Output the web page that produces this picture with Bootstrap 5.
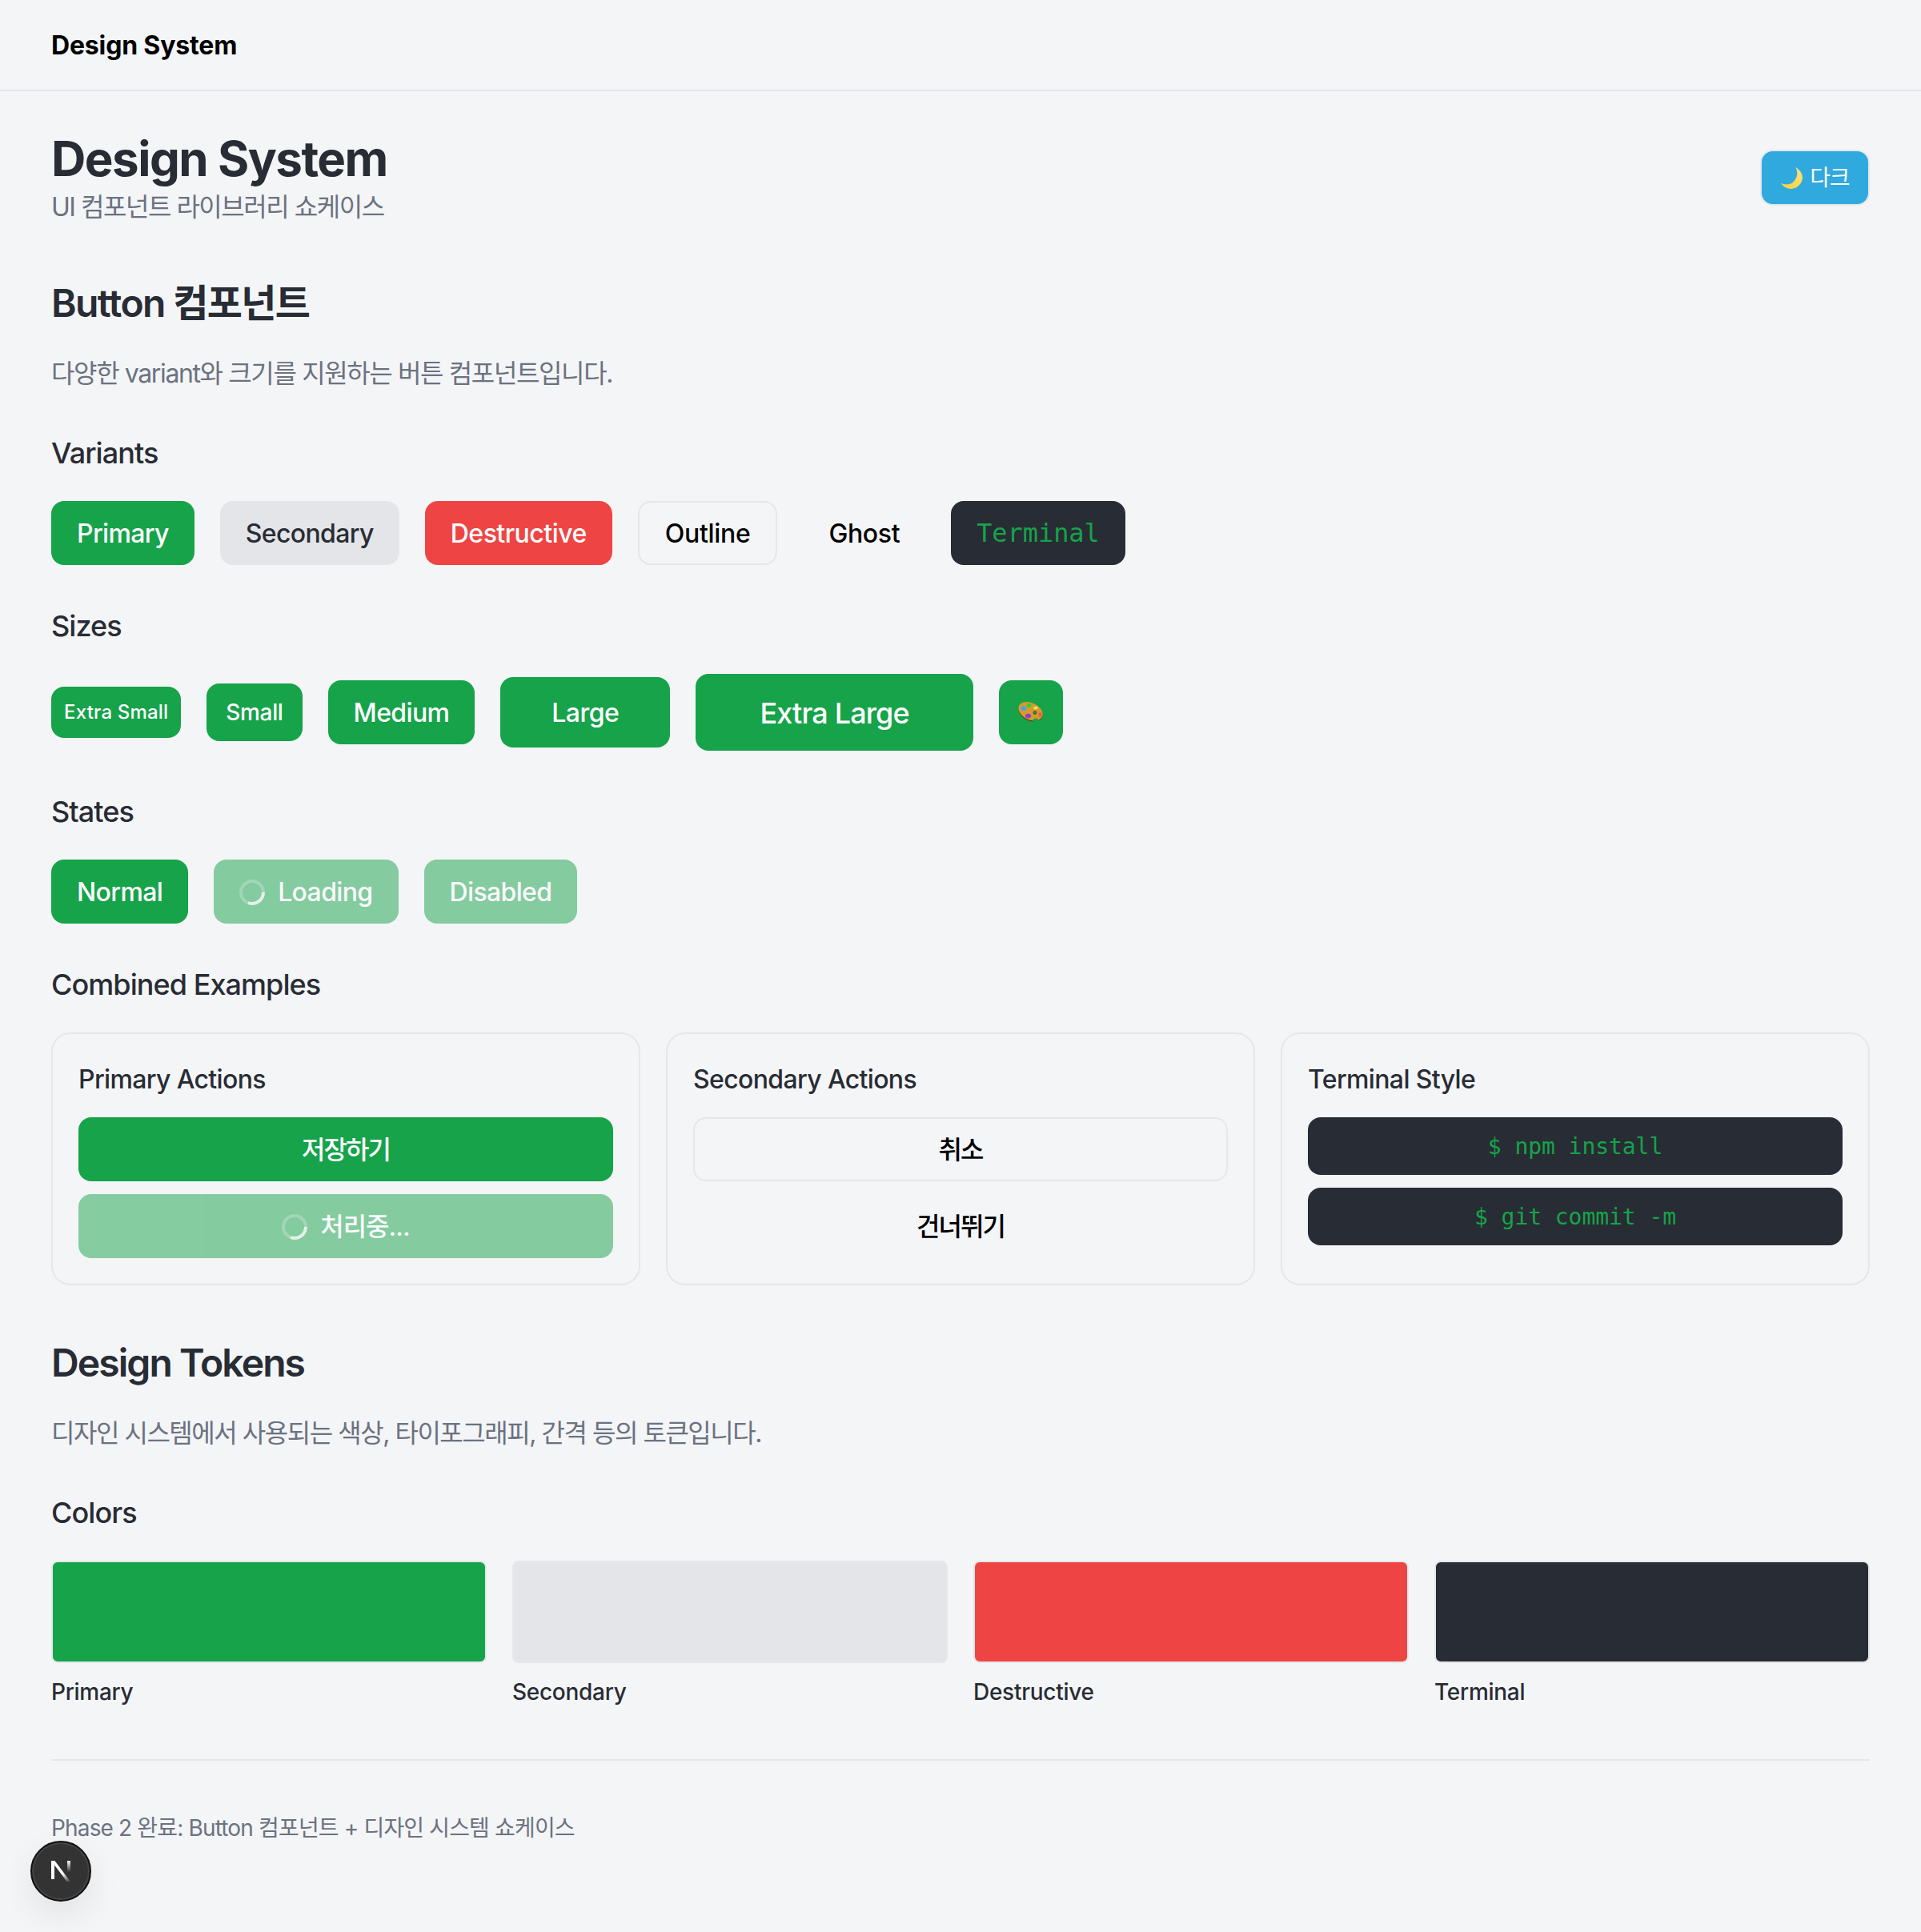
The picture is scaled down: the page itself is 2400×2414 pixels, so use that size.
<!DOCTYPE html>
<html lang="ko">
<head>
  <meta charset="UTF-8">
  <title>Design System</title>
  <meta name="viewport" content="width=device-width, initial-scale=1.0">
  <link href="https://cdn.jsdelivr.net/npm/bootstrap@5.3.0/dist/css/bootstrap.min.css" rel="stylesheet">
  <style>
    body { background: #f4f5f7; color: #282c34; min-height: 2414px; position: relative;
      font-family: Inter, "Noto Sans CJK KR", sans-serif; font-size: 32px; line-height: 48px; }
    .ds-nav { height: 114px; padding: 2px 64px 0; border-bottom: 2px solid #e5e7eb; }
    .ds-brand { font-size: 32px; font-weight: 700; letter-spacing: -0.005em; color: #000; padding: 0; margin: 0; }
    .ds-main { padding: 48px 64px 0; }
    .ds-title { font-size: 60px; line-height: 72px; font-weight: 700; letter-spacing: -0.025em; margin: 0; }
    .ds-muted { color: #6b7280; }
    .ds-ko { letter-spacing: -0.046em; padding-top: 1px; margin-bottom: -1px !important; }
    .ds-ko-wide { letter-spacing: -0.043em; }
    .ds-theme { height: 70px; padding: 0 24px; gap: 8px; font-size: 28px; line-height: 40px; color: #fff;
      background: #2fa9de; border: 2px solid #e5e7eb; border-radius: 16px; letter-spacing: -0.05em; }
    .ds-h2 { font-size: 48px; line-height: 64px; font-weight: 600; letter-spacing: -0.034em; margin: 64px 0 32px; padding-top: 1px; height: 64px; }
    .ds-h2-tight { letter-spacing: -0.04em; }
    .ds-h3 { font-size: 36px; line-height: 56px; font-weight: 500; letter-spacing: -0.026em; margin: 48px 0 32px; }
    .ds-row { gap: 32px; }
    .ds-btn { --bs-btn-disabled-opacity: .5; --bs-btn-border-width: 0; height: 80px; padding: 2px 32px 0; gap: 16px;
      font-size: 32px; line-height: 46px; font-weight: 500; letter-spacing: -0.02em; border-radius: 16px;
      font-family: Inter, "Noto Sans CJK KR", sans-serif; }
    .ds-primary { --bs-btn-bg: #16a34a; --bs-btn-color: #fff; --bs-btn-disabled-bg: #16a34a; --bs-btn-disabled-color: #fff; }
    .ds-secondary { --bs-btn-bg: #e4e5e9; --bs-btn-color: #282c34; }
    .ds-destructive { --bs-btn-bg: #ef4444; --bs-btn-color: #fff; letter-spacing: -0.016em; }
    .ds-outline { --bs-btn-color: #000; border: 2px solid #e5e7eb; letter-spacing: -0.01em; }
    .ds-ghost { --bs-btn-color: #000; letter-spacing: -0.012em; }
    .ds-terminal { --bs-btn-bg: #282c34; --bs-btn-color: #16a34a; font-family: "DejaVu Sans Mono", monospace; font-weight: 400; letter-spacing: -0.002em; padding-top: 0; }
    .ds-xs { height: 64px; padding: 0 16px; font-size: 24px; letter-spacing: 0.008em; }
    .ds-sm { height: 72px; padding: 0 24px; font-size: 28px; letter-spacing: -0.012em; }
    .ds-lg { height: 88px; padding: 2px 64px 0; font-size: 32px; letter-spacing: -0.016em; }
    .ds-xl { height: 96px; padding: 2px 80px 0; font-size: 36px; letter-spacing: -0.024em; }
    .ds-icon { width: 80px; padding: 0; }
    .ds-btn-ko { letter-spacing: -0.06em; }
    .ds-btn-dots { letter-spacing: -0.03em; }
    .ds-cols { --bs-gutter-x: 32px; --bs-gutter-y: 0; }
    .ds-card { --bs-card-bg: transparent; --bs-card-border-width: 2px; --bs-card-border-color: #e5e7eb;
      --bs-card-border-radius: 24px; --bs-card-spacer-x: 32px; --bs-card-spacer-y: 32px; height: 316px; }
    .ds-card-title { font-size: 32px; line-height: 48px; font-weight: 500; letter-spacing: -0.02em; margin: 0 0 24px; padding-top: 1px; height: 48px; }
    .ds-stack { gap: 16px; }
    .ds-stack .ds-terminal { height: 72px; padding-bottom: 0; padding-top: 1px; font-size: 28px; line-height: 48px; }
    .ds-swatch { height: 128px; border: 2px solid #e5e7eb; border-radius: 8px; }
    .ds-label { font-size: 28px; line-height: 40px; font-weight: 500; letter-spacing: -0.01em; margin-top: 16px; }
    .ds-rule { height: 2px; background: #e5e7eb; margin: 64px 0; }
    .ds-foot { font-size: 28px; line-height: 40px; margin: 0; letter-spacing: -0.03em; }
    .ds-badge { position: absolute; left: 38px; top: 2300px; width: 76px; height: 76px; border-radius: 50%;
      background: #333; border: 2px solid #111; box-shadow: 0 16px 40px rgba(0,0,0,.08), inset 0 0 0 2px #444; }
  </style>
</head>
<body>

  <!-- navbar -->
  <nav class="navbar ds-nav">
    <a class="navbar-brand ds-brand" href="#">Design System</a>
  </nav>

  <div class="ds-main">
    <!-- header -->
    <div class="d-flex justify-content-between align-items-center">
      <div>
        <h1 class="ds-title">Design System</h1>
        <div class="ds-muted ds-ko">UI 컴포넌트 라이브러리 쇼케이스</div>
      </div>
      <button class="btn ds-theme d-inline-flex align-items-center">
        <svg width="28" height="28" viewBox="0 0 28 28"><defs><linearGradient id="moon" x1="0" y1="1" x2="1" y2="0"><stop offset="0" stop-color="#f6d23c"/><stop offset="1" stop-color="#fbe27a"/></linearGradient></defs><path fill="url(#moon)" d="M18 1C26 5 30 14 24 22C18 30 6 30 0 21C8 24 15 22 18 16C21 11 21 5 18 1Z"/></svg>
        <span>다크</span>
      </button>
    </div>

    <h2 class="ds-h2">Button 컴포넌트</h2>
    <p class="ds-muted ds-ko ds-ko-wide m-0">다양한 variant와 크기를 지원하는 버튼 컴포넌트입니다.</p>

    <h3 class="ds-h3">Variants</h3>
    <div class="d-flex align-items-center ds-row">
      <button class="btn ds-btn ds-primary">Primary</button>
      <button class="btn ds-btn ds-secondary">Secondary</button>
      <button class="btn ds-btn ds-destructive">Destructive</button>
      <button class="btn ds-btn ds-outline">Outline</button>
      <button class="btn ds-btn ds-ghost">Ghost</button>
      <button class="btn ds-btn ds-terminal">Terminal</button>
    </div>

    <h3 class="ds-h3">Sizes</h3>
    <div class="d-flex align-items-center ds-row">
      <button class="btn ds-btn ds-primary ds-xs">Extra Small</button>
      <button class="btn ds-btn ds-primary ds-sm">Small</button>
      <button class="btn ds-btn ds-primary">Medium</button>
      <button class="btn ds-btn ds-primary ds-lg">Large</button>
      <button class="btn ds-btn ds-primary ds-xl">Extra Large</button>
      <button class="btn ds-btn ds-primary ds-icon d-inline-flex align-items-center justify-content-center">
        <svg width="32" height="26" viewBox="0 0 32 26">
          <ellipse cx="15.5" cy="13" rx="16" ry="10.5" transform="rotate(25 15.5 13)" fill="#5c3d12"/>
          <ellipse cx="15.5" cy="11.8" rx="16" ry="10.5" transform="rotate(25 15.5 11.8)" fill="#d6992f"/>
          <ellipse cx="23" cy="24" rx="4.5" ry="3" transform="rotate(25 23 24)" fill="#16a34a"/>
          <ellipse cx="7" cy="8" rx="3.4" ry="2.6" fill="#3ea6f2"/>
          <ellipse cx="13.5" cy="4.5" rx="2.8" ry="2.4" fill="#2fd12f"/>
          <ellipse cx="22" cy="7.5" rx="2.8" ry="1.9" fill="#f0e04a"/>
          <ellipse cx="12.5" cy="17.5" rx="3.6" ry="2.7" fill="#8a3fd0"/>
          <ellipse cx="27.5" cy="16" rx="2.1" ry="2.8" fill="#ef5a4c"/>
          <ellipse cx="21" cy="13.5" rx="2" ry="1.8" fill="#16a34a" stroke="#3a2a0c" stroke-width=".8"/>
        </svg>
      </button>
    </div>

    <h3 class="ds-h3">States</h3>
    <div class="d-flex align-items-center ds-row">
      <button class="btn ds-btn ds-primary">Normal</button>
      <button class="btn ds-btn ds-primary d-inline-flex align-items-center" disabled>
        <svg width="32" height="32" viewBox="0 0 32 32" fill="none" stroke="#fff" stroke-width="4"><circle cx="16" cy="16" r="14" opacity=".25"/><path d="M30 16A14 14 0 0 1 11 29" opacity=".75"/></svg>
        Loading
      </button>
      <button class="btn ds-btn ds-primary" disabled>Disabled</button>
    </div>

    <h3 class="ds-h3">Combined Examples</h3>
    <div class="row ds-cols">
      <div class="col-4">
        <div class="card ds-card">
          <div class="card-body">
            <h4 class="ds-card-title">Primary Actions</h4>
            <div class="d-flex flex-column ds-stack">
              <button class="btn ds-btn ds-primary ds-btn-ko">저장하기</button>
              <button class="btn ds-btn ds-primary ds-btn-dots d-flex align-items-center justify-content-center" disabled>
                <svg width="32" height="32" viewBox="0 0 32 32" fill="none" stroke="#fff" stroke-width="4"><circle cx="16" cy="16" r="14" opacity=".25"/><path d="M30 16A14 14 0 0 1 11 29" opacity=".75"/></svg>
                처리중...
              </button>
            </div>
          </div>
        </div>
      </div>
      <div class="col-4">
        <div class="card ds-card">
          <div class="card-body">
            <h4 class="ds-card-title">Secondary Actions</h4>
            <div class="d-flex flex-column ds-stack">
              <button class="btn ds-btn ds-outline ds-btn-ko">취소</button>
              <button class="btn ds-btn ds-ghost ds-btn-ko">건너뛰기</button>
            </div>
          </div>
        </div>
      </div>
      <div class="col-4">
        <div class="card ds-card">
          <div class="card-body">
            <h4 class="ds-card-title">Terminal Style</h4>
            <div class="d-flex flex-column ds-stack">
              <button class="btn ds-btn ds-terminal">$ npm install</button>
              <button class="btn ds-btn ds-terminal">$ git commit -m</button>
            </div>
          </div>
        </div>
      </div>
    </div>

    <h2 class="ds-h2 ds-h2-tight">Design Tokens</h2>
    <p class="ds-muted ds-ko m-0">디자인 시스템에서 사용되는 색상, 타이포그래피, 간격 등의 토큰입니다.</p>

    <h3 class="ds-h3">Colors</h3>
    <div class="row ds-cols" id="swatches"></div>

    <div class="ds-rule"></div>
    <p class="ds-muted ds-foot">Phase 2 완료: Button 컴포넌트 + 디자인 시스템 쇼케이스</p>
  </div>

  <!-- dev indicator -->
  <div class="ds-badge d-flex align-items-center justify-content-center">
    <svg width="24" height="26" viewBox="0 0 24 26">
      <defs>
        <linearGradient id="nDiag" x1="0" y1="0" x2="1" y2="1"><stop offset=".6" stop-color="#fff"/><stop offset="1" stop-color="#fff" stop-opacity="0"/></linearGradient>
        <linearGradient id="nStem" x1="0" y1="0" x2="0" y2="1"><stop offset="0" stop-color="#fff"/><stop offset=".7" stop-color="#fff" stop-opacity="0"/></linearGradient>
      </defs>
      <rect x="0" y="0" width="4" height="23" fill="#fff"/>
      <rect x="20" y="0" width="4" height="20" fill="url(#nStem)"/>
      <path d="M0 0H4.4L24 26H19.6Z" fill="url(#nDiag)"/>
    </svg>
  </div>

  <script src="https://cdn.jsdelivr.net/npm/bootstrap@5.3.0/dist/js/bootstrap.bundle.min.js"></script>
  <script>
    // color tokens
    const tokens = [
      ["Primary", "#16a34a"],
      ["Secondary", "#e4e5e9"],
      ["Destructive", "#ef4444"],
      ["Terminal", "#282c34"]
    ];
    const box = document.getElementById("swatches");
    tokens.forEach(t => {
      const col = document.createElement("div");
      col.className = "col-3";
      col.innerHTML = `<div class="ds-swatch" style="background:${t[1]}"></div><div class="ds-label">${t[0]}</div>`;
      box.appendChild(col);
    });
  </script>
</body>
</html>
